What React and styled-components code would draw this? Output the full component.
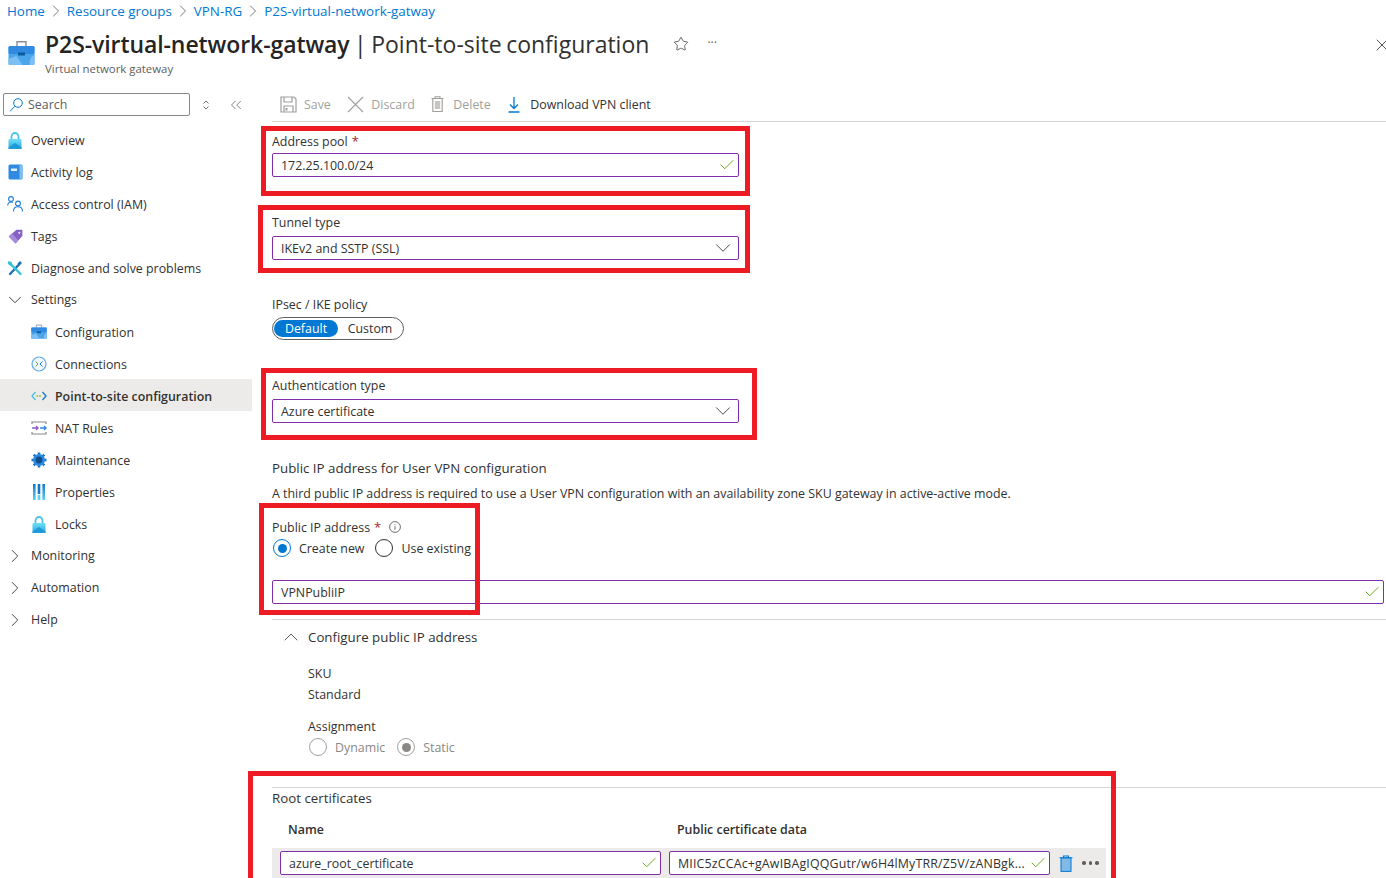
import React from "react";
import styled, { createGlobalStyle } from "styled-components";
import { ChevronDown, ChevronRight, ChevronUp, Check, ChevronsLeft, X, Star } from "lucide-react";

const GlobalStyle = createGlobalStyle`
  html, body {
    margin: 0;
    padding: 0;
    background: #fff;
  }
  body {
    width: 1386px;
    height: 878px;
    overflow: hidden;
    font-family: "Open Sans", "Liberation Sans", sans-serif;
    font-size: 12.4px;
    color: #252423;
  }
`;

const Page = styled.div`
  position: relative;
  width: 1386px;
  height: 878px;
  overflow: hidden;
`;

const Breadcrumb = styled.nav`
  display: flex;
  align-items: center;
  height: 23px;
  box-sizing: border-box;
  padding: 0 0 1px 7px;
  font-size: 13.4px;
  color: #0078d4;
  a { color: inherit; text-decoration: none; }
  svg { color: #605e5c; margin: 0 1px; }
`;

const Header = styled.header`
  position: relative;
  display: flex;
  align-items: flex-start;
  height: 69px;
  padding: 14px 0 0 8px;
  box-sizing: border-box;
`;

const TitleIcon = styled.div`
  width: 27px;
  margin-right: 10px;
  margin-top: 3px;
`;

const TitleBlock = styled.div`
  display: flex;
  flex-direction: column;
`;

const TitleRow = styled.div`
  display: flex;
  align-items: center;
  height: 14px;
  h1 {
    margin: 0;
    font-size: 23px;
    font-weight: 400;
    word-spacing: -1.5px;
    white-space: nowrap;
    color: #323130;
    b { font-weight: 600; color: #252423; letter-spacing: -0.08px; }
  }
`;

const TitleActions = styled.div`
  display: flex;
  align-items: center;
  margin-left: 24px;
  gap: 18px;
  color: #323130;
  span { font-size: 12px; line-height: 8px; margin-top: -2px; color: #605e5c; }
`;

const Subtitle = styled.div`
  font-size: 11.4px;
  color: #605e5c;
  margin-top: 10px;
`;

const CloseButton = styled.div`
  position: absolute;
  right: -6px;
  top: 12px;
  color: #323130;
`;

const Body = styled.div`
  display: flex;
`;

const Sidebar = styled.aside`
  width: 252px;
  flex-shrink: 0;
`;

const SearchRow = styled.div`
  display: flex;
  align-items: center;
  height: 23px;
  padding-left: 3px;
  margin: 1px 0 8px;
  color: #605e5c;
`;

const SearchBox = styled.div`
  display: flex;
  align-items: center;
  gap: 4px;
  width: 187px;
  height: 23px;
  box-sizing: border-box;
  border: 1px solid #8a8886;
  border-radius: 2px;
  padding-left: 4px;
  color: #605e5c;
`;

const SearchTools = styled.div`
  display: flex;
  align-items: center;
  margin-left: 12px;
  gap: 17px;
`;

const NavRow = styled.div`
  display: flex;
  align-items: center;
  height: 32px;
  box-sizing: border-box;
  padding-left: ${(p) => (p.$sub ? 31 : 7)}px;
  gap: 8px;
  color: #323130;
  background: ${(p) => (p.$active ? "#edebe9" : "transparent")};
  font-weight: ${(p) => (p.$active ? 600 : 400)};
  padding-bottom: ${(p) => (p.$group ? 1 : 0)}px;
  padding-top: ${(p) => (p.$active ? 2 : 0)}px;
  margin: ${(p) => (p.$active ? "-1px 0 1px" : "0")};
  svg { flex-shrink: 0; }
`;

const IconSlot = styled.span`
  display: inline-flex;
  align-items: center;
  justify-content: center;
  width: 16px;
  height: 16px;
  margin-left: ${(p) => p.$left || 0}px;
`;

const Main = styled.main`
  flex: 1;
  padding-left: 20px;
  min-width: 0;
`;

const Toolbar = styled.div`
  display: flex;
  align-items: center;
  height: 30px;
  box-sizing: border-box;
  margin-bottom: 11px;
  border-bottom: 1px solid #d6d6d6;
  padding-left: 8px;
  padding-bottom: 5px;
`;

const ToolButton = styled.div`
  display: flex;
  align-items: center;
  gap: ${(p) => p.$gap || 7}px;
  margin-right: 16.5px;
  color: ${(p) => (p.$disabled ? "#a19f9d" : "#323130")};
`;

const Field = styled.div`
  margin-top: ${(p) => p.$top || 0}px;
  width: 467px;
`;

const Label = styled.label`
  display: flex;
  align-items: center;
  height: 16px;
  margin-bottom: ${(p) => p.$gap || 4}px;
  color: #323130;
  white-space: nowrap;
  i { font-style: normal; font-size: 13px; color: #a4262c; margin-left: 4px; }
`;

const InputBox = styled.div`
  display: flex;
  align-items: center;
  justify-content: space-between;
  height: 24px;
  box-sizing: border-box;
  border: 1px solid #7d2ea8;
  border-radius: 2px;
  padding: 0 2px 0 8px;
  background: #fff;
  color: #323130;
  white-space: nowrap;
  flex: ${(p) => (p.$grow ? "1" : "none")};
  width: ${(p) => (p.$grow ? "0" : "auto")};
  svg { color: ${(p) => (p.$select ? "#323130" : "#57a300")}; flex-shrink: 0; }
`;

const Toggle = styled.div`
  display: inline-flex;
  align-items: center;
  height: 23px;
  width: 132px;
  box-sizing: border-box;
  border: 1px solid #605e5c;
  border-radius: 12px;
  padding: 2px 1px;
`;

const ToggleOption = styled.div`
  display: flex;
  align-items: center;
  justify-content: center;
  height: 100%;
  width: 64px;
  border-radius: 10px;
  background: ${(p) => (p.$on ? "#0078d4" : "transparent")};
  color: ${(p) => (p.$on ? "#fff" : "#323130")};
`;

const SectionHeading = styled.div`
  margin-top: ${(p) => p.$top || 0}px;
  height: 16px;
  line-height: 16px;
  font-size: 13.3px;
  color: #323130;
`;

const Paragraph = styled.p`
  margin: 10px 0 0;
  line-height: 16px;
  height: 16px;
  color: #323130;
  white-space: nowrap;
`;

const RadioRow = styled.div`
  display: flex;
  align-items: center;
  gap: ${(p) => p.$gap || 11}px;
  height: 18px;
  margin-top: ${(p) => p.$top || 0}px;
  margin-left: ${(p) => p.$indent || 0}px;
`;

const RadioItem = styled.div`
  display: flex;
  align-items: center;
  gap: 8px;
  white-space: nowrap;
  color: ${(p) => (p.$disabled ? "#8a8886" : "#323130")};
`;

const RadioCircle = styled.span`
  display: inline-flex;
  align-items: center;
  justify-content: center;
  width: 18px;
  height: 18px;
  box-sizing: border-box;
  border-radius: 50%;
  border: 1.5px solid ${(p) => (p.$disabled ? "#a19f9d" : p.$on ? "#0078d4" : "#323130")};
  &::after {
    content: "";
    display: ${(p) => (p.$on ? "block" : "none")};
    width: 9px;
    height: 9px;
    border-radius: 50%;
    background: ${(p) => (p.$disabled ? "#8a8886" : "#0078d4")};
  }
`;

const Divider = styled.hr`
  margin: ${(p) => p.$top || 0}px 0 0;
  border: 0;
  border-top: 1px solid #d6d6d6;
`;

const Accordion = styled.div`
  display: flex;
  align-items: center;
  gap: 5px;
  height: 16px;
  margin: 9px 0 0 7px;
  font-size: 13.3px;
  color: #323130;
  svg { color: #605e5c; }
`;

const Detail = styled.div`
  margin: ${(p) => p.$top || 0}px 0 0 36px;
  height: 16px;
  line-height: 16px;
  color: #323130;
`;

const CertHeader = styled.div`
  display: flex;
  height: 16px;
  margin-top: 15px;
  padding-left: 16px;
  font-weight: 600;
  color: #323130;
  span:first-child { width: 389px; }
`;

const CertRow = styled.div`
  display: flex;
  align-items: center;
  width: 834px;
  height: 30px;
  margin-top: 11px;
  padding-left: 8px;
  box-sizing: border-box;
  background: #edebe9;
  gap: 8px;
`;

const CertInput = styled(InputBox)`
  width: 381px;
  flex: none;
`;

const CertData = styled(CertInput)`
  letter-spacing: 0.16px;
`;

const CertActions = styled.div`
  display: flex;
  align-items: center;
  margin-left: 1px;
  gap: 9px;
`;

const Dots = styled.span`
  display: flex;
  gap: 3px;
  i {
    width: 3.500px;
    height: 3.500px;
    border-radius: 50%;
    background: #605e5c;
  }
`;

const FullRow = styled.div`
  display: flex;
  margin-top: ${(p) => p.$top || 0}px;
  margin-right: 2px;
`;

/* Red annotation rectangles drawn on top of the screenshot */
const Callout = styled.div`
  position: absolute;
  left: ${(p) => p.$x}px;
  top: ${(p) => p.$y}px;
  width: ${(p) => p.$w}px;
  height: ${(p) => p.$h}px;
  box-sizing: border-box;
  border: 5px solid #ed1c24;
  pointer-events: none;
`;

const Sep = () => <ChevronRight size={20} strokeWidth={1} />;

const BagIcon = ({ size = 27 }) => (
  <svg width={size} height={size} viewBox="0 0 27 27">
    <path d="M9 6V1.800h9V6" fill="none" stroke="#8a8f98" strokeWidth="1.400" />
    <rect x="0.500" y="6" width="26" height="19" rx="1.500" fill="#4aa5ea" />
    <rect x="0.500" y="6" width="26" height="8" rx="1.500" fill="#2f8ae0" />
    <path d="M0.500 19l8-3 6 9H2a1.500 1.500 0 0 1-1.500-1.500z" fill="#7cc0f3" />
    <path d="M26.500 15v8.500a1.500 1.500 0 0 1-1.500 1.500h-3a9 9 0 0 1 4.500-10z" fill="#7cc0f3" />
    <rect x="10" y="12.500" width="7" height="3" fill="#0b5a9e" />
  </svg>
);

const SearchIcon = () => (
  <svg width="16" height="16" viewBox="0 0 16 16" fill="none" stroke="#0078d4" strokeWidth="1">
    <circle cx="10" cy="6" r="4.300" />
    <path d="M7 9.200L2 14.300" />
  </svg>
);

const LockIcon = () => (
  <svg width="14" height="17" viewBox="0 0 14 17">
    <defs>
      <linearGradient id="lockFill" x1="0" y1="0" x2="0" y2="1">
        <stop offset="0" stopColor="#6fe0f7" />
        <stop offset="1" stopColor="#2aa4e0" />
      </linearGradient>
    </defs>
    <path d="M3.500 8V4.500a3.500 3.500 0 0 1 7 0V8" fill="none" stroke="#48c4ea" strokeWidth="1.800" />
    <rect x="0.500" y="7" width="13" height="10" rx="1" fill="url(#lockFill)" />
    <path d="M0.500 15.500L7 11l6.500 4.500V17H0.500z" fill="#1e9ad8" />
  </svg>
);

const LogIcon = () => (
  <svg width="15" height="16" viewBox="0 0 15 16">
    <rect x="0.500" y="0.500" width="14" height="15" rx="1.500" fill="#2f8ae0" />
    <rect x="11.500" y="0.500" width="3" height="15" rx="1" fill="#7cc0f3" />
    <rect x="3" y="4.500" width="6" height="2.500" fill="#dff0fc" />
  </svg>
);

const PeopleIcon = () => (
  <svg width="16" height="16" viewBox="0 0 16 16" fill="none" stroke="#1d7ed6" strokeWidth="1.100">
    <circle cx="4" cy="3" r="2.400" />
    <circle cx="11" cy="7.500" r="2.400" />
    <path d="M0.600 9.500c.4-2.300 1.800-3.500 3.400-3.500.8 0 1.300.2 1.800.5" />
    <path d="M6.500 15.500c0-3 2-4.700 4.500-4.700s4.500 1.700 4.500 4.700" />
  </svg>
);

const TagIcon = () => (
  <svg width="15" height="15" viewBox="0 0 16 16">
    <path d="M9 0.800h5.500a.8.8 0 0 1 .8.8V7.500L8 15.500 0.800 8z" fill="#8661c5" />
    <path d="M0.800 8L8 15.500l3-3.200L4 4.600z" fill="#a78bdc" />
    <circle cx="12" cy="4" r="1.200" fill="#e5dcf6" />
  </svg>
);

const ToolsIcon = () => (
  <svg width="16" height="16" viewBox="0 0 16 16" fill="none" strokeLinecap="round">
    <path d="M3 14L12 4.500" stroke="#1f6fb8" strokeWidth="2.400" />
    <path d="M13 1l2 2-2.500 2.500-2-2z" fill="#1f6fb8" />
    <path d="M13.500 14L4 4.500" stroke="#35c2d8" strokeWidth="2.400" />
    <path d="M1 1.500a3 3 0 0 1 4.200 2.800L3.800 5.600A3 3 0 0 1 1 1.500z" fill="#35c2d8" />
  </svg>
);

const ConnectionIcon = () => (
  <svg width="16" height="16" viewBox="0 0 16 16" fill="none">
    <circle cx="8" cy="8" r="7" stroke="#5ea9e6" strokeWidth="1.200" fill="#eef7fd" />
    <path d="M4.500 5.500L7 8l-2.500 2.500" stroke="#5db53b" strokeWidth="1" />
    <path d="M11.500 5.500L9 8l2.500 2.500" stroke="#1f7fd0" strokeWidth="1" />
  </svg>
);

const P2SIcon = () => (
  <svg width="16" height="12" viewBox="0 0 16 12" fill="none" strokeWidth="1.400">
    <path d="M4.500 2L1 6l3.500 4" stroke="#4fc0ea" />
    <path d="M11.500 2L15 6l-3.500 4" stroke="#1f7fd0" />
    <path d="M5.500 6h5" stroke="#7fba00" strokeWidth="1.600" strokeDasharray="1.500 1.200" />
  </svg>
);

const NatIcon = () => (
  <svg width="16" height="14" viewBox="0 0 16 14" fill="none">
    <path d="M1 3V1h14v2M1 11v2h14v-2" stroke="#8a8886" strokeWidth="1.200" />
    <path d="M1 7h6M5 5l2 2-2 2" stroke="#8661c5" strokeWidth="1.300" />
    <path d="M9 7h6M13 5l2 2-2 2" stroke="#2f8ae0" strokeWidth="1.300" />
  </svg>
);

const GearIcon = () => (
  <svg width="16" height="16" viewBox="0 0 16 16">
    <g stroke="#1478c8" strokeWidth="2.600">
      <path d="M8 0.500v15M0.500 8h15M2.700 2.700l10.600 10.600M13.300 2.700L2.700 13.300" />
    </g>
    <circle cx="8" cy="8" r="6" fill="#2f8ae0" />
    <circle cx="8" cy="8" r="3.400" fill="#0b4f8f" />
  </svg>
);

const PropsIcon = () => (
  <svg width="14" height="16" viewBox="0 0 14 16">
    <defs>
      <linearGradient id="barFill" x1="0" y1="0" x2="0" y2="1">
        <stop offset="0" stopColor="#1478c8" />
        <stop offset="1" stopColor="#5cd0f5" />
      </linearGradient>
    </defs>
    <rect x="1" y="0" width="2.600" height="16" fill="url(#barFill)" />
    <rect x="5.700" y="0" width="2.600" height="10" fill="#1478c8" />
    <rect x="5.700" y="11" width="2.600" height="5" fill="#5cd0f5" />
    <rect x="10.400" y="0" width="2.600" height="16" fill="url(#barFill)" />
  </svg>
);

const SaveIcon = () => (
  <svg width="17" height="17" viewBox="0 0 17 17" fill="none" stroke="#a19f9d" strokeWidth="1.200">
    <path d="M1 1h13l2 2v13H1z" />
    <path d="M4 1v5h8V1M4 16v-6h9v6" />
    <rect x="5.500" y="12" width="2" height="2.500" fill="#a19f9d" stroke="none" />
  </svg>
);

const DiscardIcon = () => (
  <svg width="17" height="17" viewBox="0 0 17 17" fill="none" stroke="#a19f9d" strokeWidth="1.100">
    <path d="M1 1l15 15M16 1L1 16" />
  </svg>
);

const TrashOutline = () => (
  <svg width="13" height="16" viewBox="0 0 13 16" fill="none" stroke="#a19f9d" strokeWidth="1.100">
    <path d="M0.500 2.500h12M4 2.500V.8h5v1.700M1.800 2.500v13h9.400v-13" />
    <rect x="3.800" y="5" width="5.400" height="8" fill="#c8c6c4" stroke="none" />
  </svg>
);

const DownloadIcon = () => (
  <svg width="14" height="17" viewBox="0 0 14 17" fill="none" stroke="#0078d4" strokeWidth="1.300">
    <path d="M7 1v11M3 8.500L7 12.500l4-4M1.500 16h11" />
  </svg>
);

const TrashBlue = () => (
  <svg width="14" height="17" viewBox="0 0 14 17">
    <path d="M0.500 2.800h13M4.500 2.800V1h5v1.800" fill="none" stroke="#0078d4" strokeWidth="1.100" />
    <rect x="2" y="3" width="10" height="13.400" fill="#83b9e6" stroke="#0078d4" strokeWidth="1" />
  </svg>
);

const InfoIcon = () => (
  <svg width="12" height="12" viewBox="0 0 12 12" fill="none" stroke="#605e5c" strokeWidth="0.900">
    <circle cx="6" cy="6" r="5.400" />
    <path d="M6 5.200v3.500M6 3.200v1" />
  </svg>
);

const SortIcon = () => (
  <svg width="8" height="10" viewBox="0 0 8 10" fill="none" stroke="#605e5c" strokeWidth="0.900">
    <path d="M1.500 3.500L4 1l2.500 2.500M1.500 6.500L4 9l2.500-2.500" />
  </svg>
);

const navTop = [
  ["Overview", <LockIcon />],
  ["Activity log", <LogIcon />],
  ["Access control (IAM)", <PeopleIcon />],
  ["Tags", <TagIcon />],
  ["Diagnose and solve problems", <ToolsIcon />],
];

const navSettings = [
  ["Configuration", <BagIcon size={16} />],
  ["Connections", <ConnectionIcon />],
  ["Point-to-site configuration", <P2SIcon />, true],
  ["NAT Rules", <NatIcon />],
  ["Maintenance", <GearIcon />],
  ["Properties", <PropsIcon />],
  ["Locks", <LockIcon />],
];

const callouts = [
  { x: 261, y: 126, w: 489, h: 70 },
  { x: 258, y: 205, w: 492, h: 68 },
  { x: 261, y: 368, w: 496, h: 72 },
  { x: 259, y: 503, w: 221, h: 112 },
  { x: 248, y: 771, w: 868, h: 120 },
];

export default function App() {
  return (
    <Page>
      <GlobalStyle />
      <Breadcrumb>
        <a>Home</a><Sep />
        <a>Resource groups</a><Sep />
        <a>VPN-RG</a><Sep />
        <a>P2S-virtual-network-gatway</a>
      </Breadcrumb>
      <Header>
        <TitleIcon><BagIcon /></TitleIcon>
        <TitleBlock>
          <TitleRow>
            <h1><b>P2S-virtual-network-gatway</b> | Point-to-site configuration</h1>
            <TitleActions>
              <Star size={16} strokeWidth={1.1} />
              <span>···</span>
            </TitleActions>
          </TitleRow>
          <Subtitle>Virtual network gateway</Subtitle>
        </TitleBlock>
        <CloseButton><X size={20} strokeWidth={1} /></CloseButton>
      </Header>
      <Body>
        <Sidebar>
          <SearchRow>
            <SearchBox><SearchIcon />Search</SearchBox>
            <SearchTools>
              <SortIcon />
              <ChevronsLeft size={18} strokeWidth={1} />
            </SearchTools>
          </SearchRow>
          {navTop.map(([label, icon]) => (
            <NavRow key={label}><IconSlot>{icon}</IconSlot>{label}</NavRow>
          ))}
          <NavRow $group><IconSlot><ChevronDown size={22} strokeWidth={1} /></IconSlot>Settings</NavRow>
          {navSettings.map(([label, icon, active]) => (
            <NavRow key={label} $sub $active={active}><IconSlot>{icon}</IconSlot>{label}</NavRow>
          ))}
          {["Monitoring", "Automation", "Help"].map((label) => (
            <NavRow key={label} $group><IconSlot><ChevronRight size={22} strokeWidth={1} /></IconSlot>{label}</NavRow>
          ))}
        </Sidebar>
        <Main>
          <Toolbar>
            <ToolButton $disabled><SaveIcon />Save</ToolButton>
            <ToolButton $disabled><DiscardIcon />Discard</ToolButton>
            <ToolButton $disabled $gap={9}><TrashOutline />Delete</ToolButton>
            <ToolButton $gap={9}><DownloadIcon />Download VPN client</ToolButton>
          </Toolbar>

          <Field>
            <Label>Address pool <i>*</i></Label>
            <InputBox>172.25.100.0/24<Check size={18} strokeWidth={1.2} /></InputBox>
          </Field>
          <Field $top={37}>
            <Label $gap={6}>Tunnel type</Label>
            <InputBox $select>IKEv2 and SSTP (SSL)<ChevronDown size={26} strokeWidth={0.8} /></InputBox>
          </Field>
          <Field $top={36}>
            <Label $gap={5}>IPsec / IKE policy</Label>
            <Toggle>
              <ToggleOption $on>Default</ToggleOption>
              <ToggleOption>Custom</ToggleOption>
            </Toggle>
          </Field>
          <Field $top={37}>
            <Label $gap={6}>Authentication type</Label>
            <InputBox $select>Azure certificate<ChevronDown size={26} strokeWidth={0.8} /></InputBox>
          </Field>

          <SectionHeading $top={37}>Public IP address for User VPN configuration</SectionHeading>
          <Paragraph>A third public IP address is required to use a User VPN configuration with an availability zone SKU gateway in active-active mode.</Paragraph>

          <Field $top={17}>
            <Label $gap={4}>Public IP address <i>*</i><IconSlot $left={6}><InfoIcon /></IconSlot></Label>
            <RadioRow $indent={1}>
              <RadioItem><RadioCircle $on />Create new</RadioItem>
              <RadioItem><RadioCircle />Use existing</RadioItem>
            </RadioRow>
          </Field>
          <FullRow $top={23}>
            <InputBox $grow>VPNPubliIP<Check size={18} strokeWidth={1.2} /></InputBox>
          </FullRow>
          <Divider $top={15} />

          <Accordion><ChevronUp size={24} strokeWidth={1} />Configure public IP address</Accordion>
          <Detail $top={21}>SKU</Detail>
          <Detail $top={5}>Standard</Detail>
          <Detail $top={16}>Assignment</Detail>
          <RadioRow $indent={37} $top={3} $gap={12}>
            <RadioItem $disabled><RadioCircle $disabled />Dynamic</RadioItem>
            <RadioItem $disabled><RadioCircle $disabled $on />Static</RadioItem>
          </RadioRow>
          <Divider $top={31} />

          <SectionHeading $top={2}>Root certificates</SectionHeading>
          <CertHeader><span>Name</span><span>Public certificate data</span></CertHeader>
          <CertRow>
            <CertInput>azure_root_certificate<Check size={18} strokeWidth={1.2} /></CertInput>
            <CertData>MIIC5zCCAc+gAwIBAgIQQGutr/w6H4lMyTRR/Z5V/zANBgk...<Check size={18} strokeWidth={1.2} /></CertData>
            <CertActions><TrashBlue /><Dots><i /><i /><i /></Dots></CertActions>
          </CertRow>
        </Main>
      </Body>
      {callouts.map((c) => (
        <Callout key={c.x + "-" + c.y} $x={c.x} $y={c.y} $w={c.w} $h={c.h} />
      ))}
    </Page>
  );
}
